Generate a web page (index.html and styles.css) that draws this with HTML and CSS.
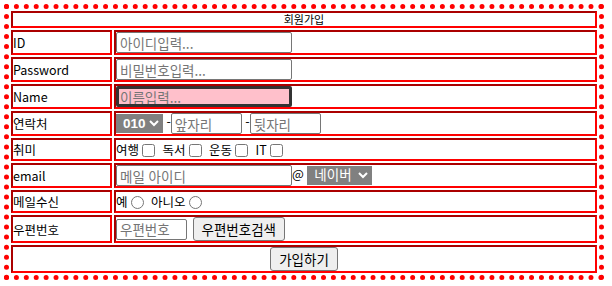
FILE: index.html
```html
<!DOCTYPE html>
<html lang="ko">
<head>
    <meta charset="UTF-8">
    <meta name="viewport" content="width=device-width, initial-scale=1.0">
    <title>회원가입</title>
    <link rel="stylesheet" href="styles.css">
</head>
<body>
    <form>
        <table class="join">
            <tr>
                <td colspan="2" class="title">회원가입</td>
            </tr>
            <tr class="row">
                <td class="label">ID</td>
                <td><input type="text" class="txt" placeholder="아이디입력..."></td>
            </tr>
            <tr class="row">
                <td class="label">Password</td>
                <td><input type="password" class="txt" placeholder="비밀번호입력..."></td>
            </tr>
            <tr class="row">
                <td class="label">Name</td>
                <td><input type="text" class="txt name" placeholder="이름입력..."></td>
            </tr>
            <tr class="row">
                <td class="label">연락처</td>
                <td>
                    <select class="sel">
                        <option>010</option>
                        <option>011</option>
                        <option>016</option>
                    </select> -<input type="text" class="txt short" placeholder="앞자리"> -<input type="text" class="txt short" placeholder="뒷자리">
                </td>
            </tr>
            <tr class="row small">
                <td class="label">취미</td>
                <td>
                    여행<input type="checkbox">
                    독서<input type="checkbox">
                    운동<input type="checkbox">
                    IT<input type="checkbox">
                </td>
            </tr>
            <tr class="row">
                <td class="label">email</td>
                <td>
                    <input type="text" class="txt" placeholder="메일 아이디">@
                    <select class="sel mail">
                        <option>네이버</option>
                        <option>다음</option>
                        <option>구글</option>
                    </select>
                </td>
            </tr>
            <tr class="row small">
                <td class="label">메일수신</td>
                <td>
                    예<input type="radio" name="recv">
                    아니오<input type="radio" name="recv">
                </td>
            </tr>
            <tr class="row tall">
                <td class="label">우편번호</td>
                <td>
                    <input type="text" class="txt short" placeholder="우편번호">
                    <button type="button" class="btn find">우편번호검색</button>
                </td>
            </tr>
            <tr class="row tall">
                <td colspan="2" class="submit">
                    <button type="submit" class="btn">가입하기</button>
                </td>
            </tr>
        </table>
    </form>
</body>
</html>
```

FILE: styles.css
```css
body {
    margin: 4px;
    font-family: "Noto Sans CJK KR", "Noto Sans", sans-serif;
    color: #000;
}
.join {
    width: 600px;
    border: 5px dotted red;
    border-spacing: 2px;
}
.join td {
    border: 2px inset red;
    padding: 0;
    font-size: 12.5px;
    line-height: 15px;
    height: 21px;
    vertical-align: middle;
}
.join .title {
    text-align: center;
    font-size: 11px;
    line-height: 13px;
    height: 13px;
}
.join .label {
    width: 97px;
}
.join .small td {
    height: 19px;
}
.join .tall td {
    height: 24px;
}
.join .submit {
    text-align: center;
}
.txt {
    box-sizing: border-box;
    width: 176px;
    height: 21px;
    margin: 0;
    padding: 1px 3px;
    border: 1px solid #767676;
    border-radius: 2px;
    font-family: inherit;
    font-size: 13.5px;
    line-height: 17px;
    vertical-align: middle;
}
.txt::placeholder {
    color: #757575;
}
.txt.short {
    width: 71px;
}
.txt.name {
    background: pink;
    border: 3px solid #333;
    padding: 0 1px;
}
.sel {
    box-sizing: border-box;
    width: 47px;
    height: 19px;
    margin: 0;
    padding: 0 0 0 2px;
    border: 1px solid gray;
    border-radius: 0;
    background: gray;
    color: #fff;
    font-family: "Liberation Sans", "Noto Sans CJK KR", sans-serif;
    font-size: 13.5px;
    font-weight: bold;
    vertical-align: middle;
}
.sel.mail {
    width: 65px;
    font-weight: normal;
}
.join input[type="checkbox"],
.join input[type="radio"] {
    width: 13px;
    height: 13px;
    margin: 0 4px 0 3px;
    vertical-align: -2px;
}
.btn {
    box-sizing: border-box;
    height: 24px;
    margin: 0;
    padding: 0 8px;
    border: 1px solid #767676;
    border-radius: 3px;
    background: #efefef;
    font-family: inherit;
    font-size: 13.5px;
    line-height: 20px;
    vertical-align: middle;
}
.btn.find {
    margin-left: 2px;
}
```
